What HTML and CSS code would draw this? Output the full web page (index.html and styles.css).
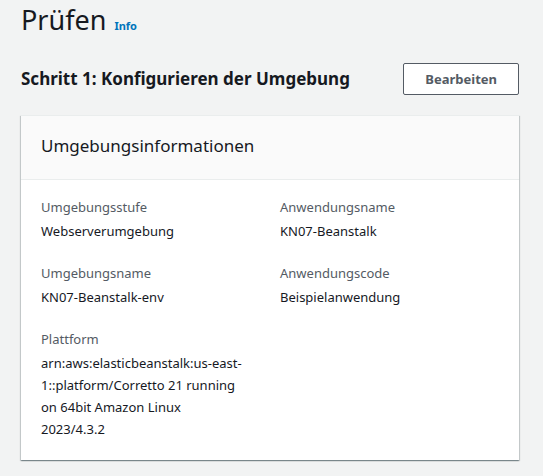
FILE: index.html
```html
<!DOCTYPE html>
<html lang="de">
<head>
<meta charset="utf-8">
<title>Prüfen</title>
<link rel="stylesheet" href="styles.css">
</head>
<body>
<main class="page">
  <header class="page-header">
    <h1>Prüfen</h1>
    <a class="info" href="#info">Info</a>
  </header>
  <div class="step-header">
    <h2>Schritt 1: Konfigurieren der Umgebung</h2>
    <button class="button" type="button">Bearbeiten</button>
  </div>
  <section class="card">
    <div class="card-header"><h3>Umgebungsinformationen</h3></div>
    <div class="card-body">
      <dl class="column">
        <div><dt>Umgebungsstufe</dt><dd>Webserverumgebung</dd></div>
        <div><dt>Umgebungsname</dt><dd>KN07-Beanstalk-env</dd></div>
        <div><dt>Plattform</dt><dd>arn:aws:elasticbeanstalk:us-east-1::platform/Corretto 21 running on 64bit Amazon Linux 2023/4.3.2</dd></div>
      </dl>
      <dl class="column">
        <div><dt>Anwendungsname</dt><dd>KN07-Beanstalk</dd></div>
        <div><dt>Anwendungscode</dt><dd>Beispielanwendung</dd></div>
      </dl>
    </div>
  </section>
</main>
</body>
</html>
```
FILE: styles.css
```css
* {
  box-sizing: border-box;
}

body {
  margin: 0;
  background: #f2f3f3;
  color: #16191f;
  font-family: "Noto Sans", "Open Sans", sans-serif;
  font-size: 13px;
  line-height: 22px;
}

h1, h2, h3, dl, dd {
  margin: 0;
}

.page {
  padding: 2px 24px 16px 21px;
}

.page-header {
  display: flex;
  align-items: baseline;
  gap: 8px;
}

h1 {
  font-size: 27px;
  font-weight: 400;
  line-height: 36px;
}

.info {
  color: #0073bb;
  font-size: 11px;
  font-weight: 700;
  text-decoration: none;
}

.step-header {
  display: flex;
  align-items: center;
  justify-content: space-between;
  margin: 25px 0 20px;
}

h2 {
  font-size: 17px;
  font-weight: 700;
  line-height: 22px;
}

.button {
  height: 32px;
  padding: 0 21px;
  border: 1px solid #545b64;
  border-radius: 2px;
  background: #fff;
  color: #545b64;
  font: inherit;
  font-weight: 700;
}

.card {
  background: #fff;
  border-top: 1px solid #eaeded;
  box-shadow: 0 1px 1px 0 rgba(0, 28, 36, 0.3), 1px 1px 1px 0 rgba(0, 28, 36, 0.15), -1px 1px 1px 0 rgba(0, 28, 36, 0.15);
}

.card-header {
  padding: 19px 20px 22px;
  border-bottom: 1px solid #eaeded;
  background: #fafafa;
}

h3 {
  font-size: 17px;
  font-weight: 400;
  line-height: 22px;
}

.card-body {
  display: grid;
  grid-template-columns: 1fr 1fr;
  gap: 20px;
  padding: 16px 20px 20px;
}

.column {
  display: grid;
  align-content: start;
  gap: 20px;
  padding-right: 16px;
}

dt {
  margin-bottom: 2px;
  color: #545b64;
}
```
